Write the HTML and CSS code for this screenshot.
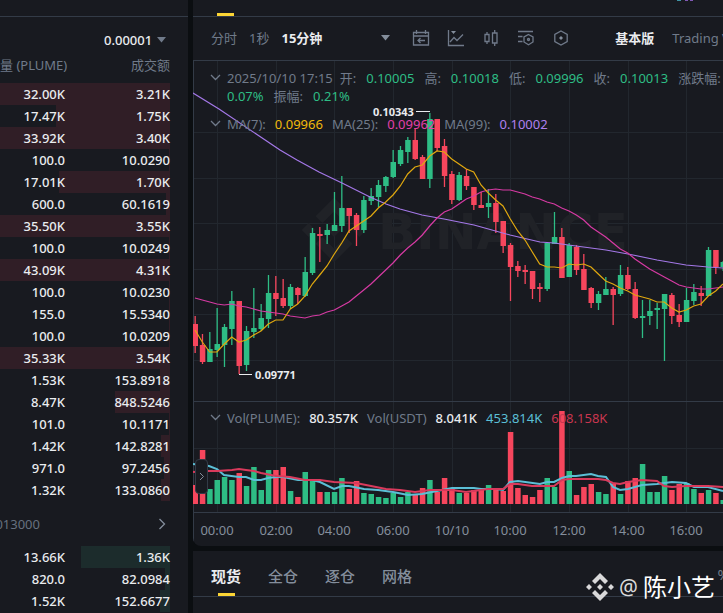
FILE: index.html
```html
<!DOCTYPE html>
<html lang="zh-cn">
<head>
    <meta charset="UTF-8">
    <meta name="viewport" content="width=device-width, initial-scale=1.0">
    <title>PLUME/USDT 现货交易</title>
    <link rel="stylesheet" href="styles.css">
</head>
<body>
    <div class="layout">
        <aside class="book">
            <div class="strip"></div>
            <div class="precision">
                <select class="precision-select" aria-label="价格精度">
                    <option>0.00001</option>
                </select>
                <svg class="caret" width="10" height="6"><path d="M0 0H9L4.5 5.5Z" fill="#707a8a"/></svg>
            </div>
            <table class="orders">
                <thead>
                    <tr><th>量 (PLUME)</th><th>成交额</th></tr>
                </thead>
                <tbody class="asks" id="asks"></tbody>
            </table>
            <div class="last-price">
                <span class="mark-price">013000</span>
                <button class="icon-btn" aria-label="更多">
                    <svg width="8" height="12" fill="none" stroke="#848e9c" stroke-width="1.3"><path d="M1.5 1L6.5 6L1.5 11"/></svg>
                </button>
            </div>
            <table class="orders">
                <tbody class="bids" id="bids"></tbody>
            </table>
        </aside>

        <main class="main">
            <section class="chart-panel">
                <div class="strip main-strip">
                    <span class="strip-mark"></span>
                    <svg class="strip-icon" width="18" height="2"><path d="M0 0H4V1H0Z" fill="#3f93a5"/><path d="M8 0H11V1H8ZM13 0H16V1H13Z" fill="#8058b5"/></svg>
                </div>
                <div class="toolbar">
                    <div class="intervals">
                        <button>分时</button>
                        <button>1秒</button>
                        <button class="active">15分钟</button>
                    </div>
                    <div class="tools">
                        <button class="icon-btn" aria-label="更多周期">
                            <svg width="10" height="6"><path d="M0 0H9L4.5 5.5Z" fill="#848e9c"/></svg>
                        </button>
                    </div>
                    <div class="tools icons">
                        <button class="icon-btn" aria-label="日期">
                            <svg width="18" height="18"><path d="M1.5 3.5H16.5V16H1.5ZM1.5 7H16.5M4.5 1V5M13.5 1V5M13 11.5H6M8.5 9L6 11.5L8.5 14"/></svg>
                        </button>
                        <button class="icon-btn" aria-label="图表类型">
                            <svg width="18" height="18"><path d="M1.5 1V16.5H17M3 13L7 8.5L10 11.5L16 5.5"/><path d="M4 2H9L6.5 5Z" fill="#848e9c" stroke="none"/></svg>
                        </button>
                        <button class="icon-btn" aria-label="蜡烛图">
                            <svg width="18" height="18"><path d="M3 5.5H7V12.5H3ZM5 3V5.5M5 12.5V15M10.5 4H15V14H10.5ZM12.7 1V4M12.7 14V17"/></svg>
                        </button>
                        <button class="icon-btn" aria-label="指标">
                            <svg width="18" height="18"><path d="M1 2.5H16M1 7.5H5.5M1 12.5H5.5M11.5 5.5L16 8V13L11.5 15.8L7 13V8Z"/><circle cx="11.5" cy="10.5" r="1"/></svg>
                        </button>
                        <button class="icon-btn" aria-label="设置">
                            <svg width="18" height="18"><path d="M9 2L15.2 5.5V12.5L9 16L2.8 12.5V5.5Z"/><path d="M9 7L11 9L9 11L7 9Z" fill="#848e9c" stroke="none"/></svg>
                        </button>
                    </div>
                    <div class="views">
                        <button class="active">基本版</button>
                        <button>Trading View</button>
                    </div>
                </div>
                <div class="plot">
                    <svg class="plot-svg" id="plot"></svg>
                    <div class="legend legend-price">
                        <svg class="chevron" width="11" height="18"><path d="M1 6L5.5 10.5L10 6"/></svg>
                        <p class="ohlc">
                            <span class="date">2025/10/10 17:15</span>
                            <span>开:</span><b class="up">0.10005</b>
                            <span>高:</span><b class="up">0.10018</b>
                            <span>低:</span><b class="up">0.09996</b>
                            <span>收:</span><b class="up">0.10013</b>
                            <span>涨跌幅:</span><b class="up">0.07%</b>
                            <span>振幅:</span><b class="up">0.21%</b>
                        </p>
                        <svg class="chevron" width="11" height="18"><path d="M1 6L5.5 10.5L10 6"/></svg>
                        <p>
                            <span>MA(7):</span><b class="ma7">0.09966</b>
                            <span>MA(25):</span><b class="ma25">0.09962</b>
                            <span>MA(99):</span><b class="ma99">0.10002</b>
                        </p>
                    </div>
                    <div class="legend legend-volume">
                        <svg class="chevron" width="11" height="18"><path d="M1 6L5.5 10.5L10 6"/></svg>
                        <p>
                            <span>Vol(PLUME):</span><b class="plain">80.357K</b>
                            <span>Vol(USDT)</span><b class="plain">8.041K</b>
                            <b class="vol-a">453.814K</b><b class="vol-b">608.158K</b>
                        </p>
                    </div>
                    <button class="side-toggle" aria-label="展开">
                        <svg width="6" height="9" fill="none" stroke="#848e9c"><path d="M1 1L4.5 4.5L1 8"/></svg>
                    </button>
                </div>
            </section>

            <section class="trade-panel">
                <nav class="tabs">
                    <a href="#" class="active">现货</a>
                    <a href="#">全仓</a>
                    <a href="#">逐仓</a>
                    <a href="#">网格</a>
                    <span class="fee">%</span>
                </nav>
            </section>
        </main>
    </div>

    <div class="signature">
        <svg width="28" height="28" viewBox="-14 -14 28 28" fill="#d9d9da">
            <path d="M0-14L8-6L5-3L0-8L-5-3L-8-6Z"/>
            <path d="M0 14L8 6L5 3L0 8L-5 3L-8 6Z"/>
            <path d="M-11-3L-8 0L-11 3L-14 0ZM11-3L14 0L11 3L8 0ZM0-3L3 0L0 3L-3 0Z"/>
        </svg>
        <span class="at">@</span>
        <span>陈小艺</span>
    </div>
    <script src="script.js"></script>
</body>
</html>
```

FILE: styles.css
```css
* {
    box-sizing: border-box;
}
body {
    margin: 0;
    background-color: #0b0e11;
    color: #eaecef;
    font-family: "Noto Sans", "Noto Sans CJK SC", sans-serif;
    font-size: 13px;
    line-height: 18px;
    height: 100vh;
    overflow: hidden;
}
button,
select {
    font: inherit;
    color: inherit;
    background: none;
    border: none;
    padding: 0;
    cursor: pointer;
}
.layout {
    display: grid;
    grid-template-columns: 188px minmax(0, 1fr);
    gap: 5px;
    height: 100%;
}
.strip {
    height: 17px;
    border-bottom: 1px solid #333b47;
}

/* 订单簿 */
.book {
    background-color: #181a20;
    overflow: hidden;
}
.precision {
    display: flex;
    justify-content: flex-end;
    align-items: center;
    gap: 4px;
    padding: 11px 21px 0 0;
    height: 35px;
    font-weight: 500;
}
.precision-select {
    appearance: none;
}
.orders {
    width: 170px;
    border-collapse: collapse;
    table-layout: fixed;
}
.orders th {
    height: 31px;
    padding: 0 0 5px;
    font-weight: 400;
    color: #707a8a;
    text-align: right;
    white-space: nowrap;
}
.orders th:first-child,
.orders td:first-child {
    width: 67px;
}
.orders tr {
    background-repeat: no-repeat;
    background-position: right top;
}
.orders td {
    height: 22px;
    padding: 0;
    font-weight: 500;
    text-align: right;
}
.orders td:first-child {
    padding-right: 2px;
}
.asks tr {
    background-image: linear-gradient(#301e26, #301e26);
}
.bids tr {
    background-image: linear-gradient(#1c2c2c, #1c2c2c);
}
.last-price {
    display: flex;
    align-items: center;
    justify-content: space-between;
    height: 45px;
    padding-right: 22px;
    color: #66707f;
}
.mark-price {
    display: flex;
    justify-content: flex-end;
    width: 40px;
}
.icon-btn {
    display: flex;
}

/* 图表 */
.main {
    display: flex;
    flex-direction: column;
    gap: 5px;
}
.chart-panel {
    background-color: #181a20;
    border-radius: 0 0 0 8px;
    overflow: hidden;
}
.main-strip {
    display: flex;
    justify-content: space-between;
    padding: 0 28px 0 24px;
}
.strip-mark {
    width: 17px;
    height: 3px;
    margin-top: 13px;
    background-color: #fcd535;
}
.toolbar {
    display: flex;
    align-items: center;
    height: 44px;
    padding: 0 0 2px 18px;
    color: #707a8a;
    border-bottom: 1px solid #333b47;
    white-space: nowrap;
    overflow: hidden;
}
.toolbar .active {
    color: #eaecef;
    font-weight: 700;
}
.intervals {
    display: flex;
    gap: 12px;
    margin-right: 59px;
}
.tools {
    display: flex;
    gap: 17px;
    margin-right: 21px;
}
.icons {
    margin-right: 45px;
}
.icons svg {
    fill: none;
    stroke: #707a8a;
    stroke-width: 1.3;
}
.views {
    display: flex;
    gap: 18px;
}
.plot {
    position: relative;
    box-shadow: inset 1px 0 #333b47;
}
.plot-svg {
    display: block;
    width: 100%;
    height: 485px;
}
.legend {
    position: absolute;
    left: 17px;
    right: -8px;
    display: grid;
    grid-template-columns: 11px minmax(0, 1fr);
    column-gap: 6px;
    row-gap: 10px;
    color: #707a8a;
}
.legend-price {
    top: 8px;
}
.legend-volume {
    top: 348px;
}
.legend p {
    margin: 0;
    font-size: 0;
}
.legend span,
.legend b {
    display: inline-block;
    height: 18px;
    margin-right: 9px;
    font-size: 13px;
    font-weight: 400;
    vertical-align: top;
}
.legend .ohlc span,
.legend .ohlc b {
    margin-right: 10px;
}
.legend .ohlc .date {
    margin-right: 7px;
}
.chevron {
    fill: none;
    stroke: #707a8a;
    stroke-width: 1.3;
}
.up {
    color: #2ebd85;
}
.ma7 {
    color: #f0b90b;
}
.ma25 {
    color: #e23fa9;
}
.ma99 {
    color: #af80ee;
}
.legend .plain {
    color: #eaecef;
    font-weight: 500;
}
.vol-a {
    color: #5bbfd6;
}
.vol-b {
    color: #c8364f;
}
.side-toggle {
    position: absolute;
    left: 2px;
    top: 398px;
    display: flex;
    align-items: center;
    justify-content: center;
    width: 13px;
    height: 35px;
    background-color: #181a20;
    border: 1px solid #333b47;
    border-radius: 4px;
}

.plot-svg .grid {
    stroke: #22272e;
}
.plot-svg .divider {
    stroke: #333b47;
}
.plot-svg .line {
    fill: none;
}
.plot-svg .axis {
    fill: #848e9c;
    font-size: 13px;
    text-anchor: middle;
}
.plot-svg .tag {
    fill: #eaecef;
    font-size: 11px;
    font-weight: 700;
}
.plot-svg .brand {
    fill: #202227;
}
.plot-svg .brand text {
    font-family: "DejaVu Sans", sans-serif;
    font-size: 50px;
    font-weight: 700;
}

/* 下单 */
.trade-panel {
    flex: 1;
    background-color: #181a20;
}
.tabs {
    display: flex;
    gap: 27px;
    height: 46px;
    padding-left: 18px;
    border-bottom: 1px solid #333b47;
    overflow: hidden;
}
.tabs a {
    display: flex;
    flex-direction: column;
    align-items: center;
    justify-content: space-between;
    padding-top: 16px;
    color: #848e9c;
    font-size: 15px;
    font-weight: 500;
    text-decoration: none;
}
.tabs .active {
    color: #eaecef;
    font-weight: 700;
}
.tabs .active::after {
    content: "";
    width: 17px;
    height: 3px;
    background-color: #fcd535;
}
.fee {
    margin: 14px -7px 0 auto;
    color: #707a8a;
    font-size: 15px;
}
.signature {
    position: absolute;
    right: 8px;
    bottom: 9px;
    display: flex;
    align-items: center;
    gap: 5px;
    color: #fff;
    font-size: 24px;
    line-height: 34px;
}
.signature .at {
    color: #d9d9da;
    font-size: 21px;
    line-height: 30px;
}
```

FILE: script.js
```js
// 数量, 成交额, 深度宽度(px)
var asks = [
    ['32.00K', '3.21K', 170], ['17.47K', '1.75K', 114], ['33.92K', '3.40K', 170],
    ['100.0', '10.0290', 1], ['17.01K', '1.70K', 111], ['600.0', '60.1619', 4],
    ['35.50K', '3.55K', 170], ['100.0', '10.0249', 1], ['43.09K', '4.31K', 170],
    ['100.0', '10.0230', 1], ['155.0', '15.5340', 1], ['100.0', '10.0209', 1],
    ['35.33K', '3.54K', 170], ['1.53K', '153.8918', 10], ['8.47K', '848.5246', 55],
    ['101.0', '10.1171', 1], ['1.42K', '142.8281', 9], ['971.0', '97.2456', 6],
    ['1.32K', '133.0860', 9]
];
var bids = [
    ['13.66K', '1.36K', 89], ['820.0', '82.0984', 5], ['1.52K', '152.6677', 10]
];

function fillOrders(id, rows) {
    document.getElementById(id).innerHTML = rows.map(function (r) {
        return '<tr style="background-size: ' + r[2] + 'px 100%"><td>' + r[0] + '</td><td>' + r[1] + '</td></tr>';
    }).join('');
}

// 涨跌, 最高, 实体上, 实体下, 最低, 成交量顶部
var candles = [
    [0, 255, 263, 285, 292, 424], [0, 273, 284, 301, 303, 389], [1, 271, 288, 301, 301, 428],
    [1, 247, 283, 289, 296, 419], [1, 263, 266, 284, 306, 416], [1, 230, 240, 268, 284, 419],
    [0, 240, 240, 305, 313, 412], [1, 265, 270, 304, 310, 425], [1, 227, 267, 271, 277, 406],
    [1, 243, 257, 268, 270, 429], [1, 214, 232, 258, 267, 409], [0, 215, 232, 238, 255, 409],
    [0, 218, 237, 245, 247, 406], [1, 223, 226, 245, 248, 430], [0, 226, 227, 234, 243, 436],
    [1, 196, 211, 235, 236, 411], [1, 167, 172, 212, 214, 419], [0, 166, 173, 175, 201, 431],
    [1, 163, 169, 174, 183, 431], [1, 131, 164, 170, 170, 431], [1, 115, 147, 165, 171, 417],
    [0, 147, 147, 155, 172, 428], [0, 152, 154, 169, 185, 420], [1, 135, 139, 169, 172, 432],
    [1, 127, 135, 140, 144, 433], [1, 119, 124, 136, 146, 436], [1, 115, 116, 125, 131, 437],
    [1, 89, 101, 116, 117, 432], [1, 85, 89, 103, 105, 436], [1, 76, 79, 91, 102, 431],
    [0, 67, 79, 98, 99, 433], [0, 94, 96, 118, 118, 427], [1, 52, 58, 118, 127, 419],
    [0, 58, 58, 87, 90, 431], [0, 78, 85, 115, 126, 417], [0, 110, 113, 139, 143, 428],
    [1, 111, 114, 139, 140, 432], [0, 108, 115, 125, 129, 432], [0, 126, 126, 144, 149, 429],
    [0, 131, 144, 147, 147, 429], [1, 128, 142, 146, 157, 424], [0, 133, 142, 161, 172, 429],
    [0, 160, 160, 185, 192, 430], [0, 182, 184, 206, 240, 371], [0, 200, 205, 210, 216, 427],
    [0, 204, 209, 211, 223, 434], [0, 210, 210, 228, 238, 436], [0, 222, 226, 228, 241, 429],
    [1, 182, 182, 228, 230, 417], [1, 151, 176, 183, 183, 426], [0, 167, 176, 217, 217, 350],
    [1, 182, 184, 216, 216, 410], [0, 184, 186, 209, 214, 434], [0, 193, 208, 229, 229, 426],
    [0, 226, 227, 242, 247, 423], [1, 230, 233, 242, 249, 431], [1, 216, 228, 234, 234, 433],
    [0, 226, 228, 234, 264, 423], [1, 204, 214, 233, 235, 433], [0, 206, 214, 228, 229, 420],
    [0, 221, 228, 257, 258, 417], [1, 239, 255, 257, 277, 403], [1, 239, 250, 255, 264, 431],
    [1, 242, 247, 249, 268, 431], [1, 233, 233, 248, 300, 415], [0, 232, 234, 255, 263, 429],
    [0, 243, 254, 261, 266, 423], [1, 227, 239, 261, 261, 422], [1, 223, 231, 240, 244, 428],
    [0, 225, 232, 235, 245, 432], [1, 186, 189, 235, 235, 429], [0, 189, 189, 206, 213, 432],
    [1, 200, 201, 206, 210, 439]
];
var ma7 = [269, 281, 291, 291, 283, 276, 281, 279, 274, 270, 263, 259, 259, 248, 243, 235, 223, 214, 205,
    193, 182, 170, 165, 160, 155, 147, 141, 134, 125, 113, 106, 104, 95, 90, 91, 98, 103, 108, 111, 124,
    132, 139, 145, 158, 170, 179, 191, 203, 206, 206, 207, 203, 204, 203, 206, 213, 220, 223, 227, 230,
    234, 236, 238, 241, 241, 247, 251, 249, 245, 243, 235, 230, 223];
var ma25 = [237, 239, 241, 243, 244, 243, 245, 246, 248, 250, 251, 252, 253, 255, 256, 257, 255, 254, 251,
    249, 245, 241, 235, 229, 223, 216, 209, 202, 194, 187, 181, 174, 165, 157, 151, 148, 143, 138, 135,
    131, 129, 128, 129, 129, 131, 133, 136, 138, 141, 143, 147, 150, 154, 159, 166, 171, 176, 182, 188,
    192, 198, 203, 208, 212, 216, 220, 224, 226, 227, 228, 228, 227, 226];
var ma99 = '0,32 26,48 87,89 104,99 126,111 149,122 177,136 193,143 207,148 229,154 251,158 281,164 ' +
    '317,174 347,181 361,182 383,185 413,189 435,193 464,199 493,204 515,206 530,207';
var volA = '0,403 16,405 24,408 31,414 46,416 53,416 61,419 68,419 75,417 83,416 90,416 105,419 119,419 ' +
    '127,421 141,428 149,425 156,425 171,428 185,429 200,431 215,434 229,433 244,430 259,427 281,427 ' +
    '288,428 303,428 310,429 317,421 325,420 347,423 354,421 361,421 369,417 376,415 383,415 398,413 ' +
    '405,415 413,416 420,426 427,429 435,428 449,424 464,423 479,421 493,422 501,426 515,426 530,430';
var volB = '0,411 15,410 24,410 39,409 46,408 53,409 61,410 68,412 83,415 97,416 112,419 127,419 141,421 ' +
    '163,422 178,425 193,428 207,429 222,431 237,429 259,429 273,431 295,428 310,428 317,423 325,423 ' +
    '339,425 361,425 369,419 376,418 405,418 413,419 420,422 427,423 435,421 449,419 464,420 471,425 ' +
    '479,426 493,425 515,425 530,426';
var times = ['00:00', '02:00', '04:00', '06:00', '10/10', '10:00', '12:00', '14:00', '16:00'];
var step = 22 / 3;

function xAt(i) {
    return 2 + i * step;
}

function line(points, color, width) {
    if (typeof points !== 'string') {
        points = points.map(function (y, i) { return xAt(i).toFixed(1) + ',' + y; }).join(' ');
    }
    return '<polyline class="line" points="' + points + '" stroke="' + color + '" stroke-width="' + width + '"/>';
}

function drawPlot() {
    var s = '';
    [71, 117, 162, 208, 253, 299, 387].forEach(function (y) {
        s += '<path class="grid" d="M1 ' + (y + 0.5) + 'H3000"/>';
    });
    times.forEach(function (t, n) {
        var x = Math.round(xAt(3 + n * 8));
        s += '<path class="grid" d="M' + (x + 0.5) + ' 0V451"/>';
        s += '<text class="axis" x="' + x + '" y="474">' + t + '</text>';
    });
    s += '<path class="divider" d="M1 340.5H3000M1 451.5H3000"/>';

    // 水印
    s += '<g class="brand"><g transform="translate(141 169) scale(2.3)">' +
        '<path d="M0-14L8-6L5-3L0-8L-5-3L-8-6Z"/><path d="M0 14L8 6L5 3L0 8L-5 3L-8 6Z"/>' +
        '<path d="M-11-3L-8 0L-11 3L-14 0ZM11-3L14 0L11 3L8 0ZM0-3L3 0L0 3L-3 0Z"/></g>' +
        '<text x="185" y="188">BINANCE</text></g>';

    candles.forEach(function (c, i) {
        var x = xAt(i), color = c[0] ? '#2ebd85' : '#f6465d';
        s += '<g fill="' + color + '">' +
            '<rect x="' + (x - 0.5) + '" y="' + c[1] + '" width="1.3" height="' + (c[4] - c[1]) + '"/>' +
            '<rect x="' + (x - 2.5) + '" y="' + c[2] + '" width="5.5" height="' + (c[3] - c[2]) + '"/>' +
            '<rect x="' + (x - 2.5) + '" y="' + c[5] + '" width="5.5" height="' + (443 - c[5]) + '"/></g>';
    });

    s += line(ma99, '#a478e8', 1.2) + line(ma25, '#d63aa3', 1.2) + line(ma7, '#e0a80f', 1.2);
    s += line(volA, '#5bbfd6', 2) + line(volB, '#d93a5c', 2);

    s += '<path d="M223 50.5H237M46 313.5H59" stroke="#eaecef"/>';
    s += '<text class="tag" x="180" y="55">0.10343</text><text class="tag" x="62" y="318">0.09771</text>';
    document.getElementById('plot').innerHTML = s;
}

fillOrders('asks', asks);
fillOrders('bids', bids);
drawPlot();
```
